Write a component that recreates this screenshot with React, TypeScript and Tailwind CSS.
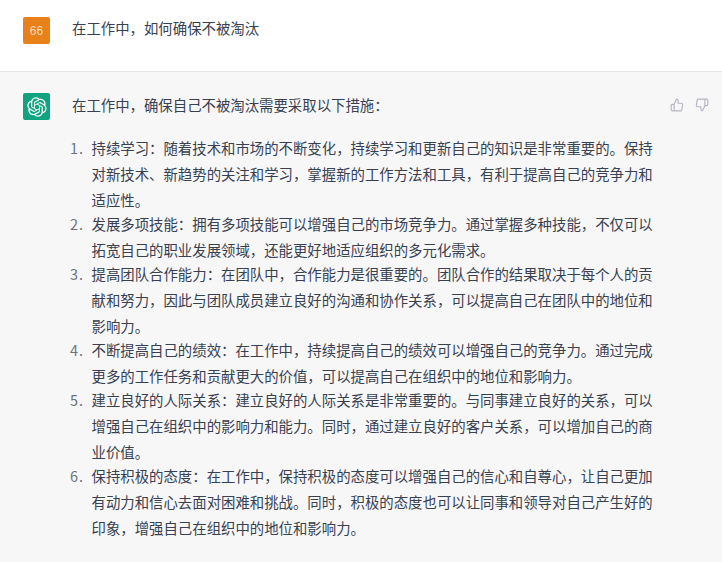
const items = [
  "持续学习：随着技术和市场的不断变化，持续学习和更新自己的知识是非常重要的。保持对新技术、新趋势的关注和学习，掌握新的工作方法和工具，有利于提高自己的竞争力和适应性。",
  "发展多项技能：拥有多项技能可以增强自己的市场竞争力。通过掌握多种技能，不仅可以拓宽自己的职业发展领域，还能更好地适应组织的多元化需求。",
  "提高团队合作能力：在团队中，合作能力是很重要的。团队合作的结果取决于每个人的贡献和努力，因此与团队成员建立良好的沟通和协作关系，可以提高自己在团队中的地位和影响力。",
  "不断提高自己的绩效：在工作中，持续提高自己的绩效可以增强自己的竞争力。通过完成更多的工作任务和贡献更大的价值，可以提高自己在组织中的地位和影响力。",
  "建立良好的人际关系：建立良好的人际关系是非常重要的。与同事建立良好的关系，可以增强自己在组织中的影响力和能力。同时，通过建立良好的客户关系，可以增加自己的商业价值。",
  "保持积极的态度：在工作中，保持积极的态度可以增强自己的信心和自尊心，让自己更加有动力和信心去面对困难和挑战。同时，积极的态度也可以让同事和领导对自己产生好的印象，增强自己在组织中的地位和影响力。",
];

const openAiLogo =
  "M37.5324 16.8707C37.9808 15.5241 38.1363 14.0974 37.9886 12.6859C37.8409 11.2744 37.3934 9.91076 36.676 8.68622C35.6126 6.83404 33.9882 5.3676 32.0373 4.4985C30.0864 3.62941 27.9098 3.40259 25.8215 3.85078C24.8796 2.7893 23.7219 1.94125 22.4257 1.36341C21.1295 0.785575 19.7249 0.491269 18.3058 0.500197C16.1708 0.495044 14.0893 1.16803 12.3614 2.42214C10.6335 3.67624 9.34853 5.44666 8.6917 7.47815C7.30085 7.76286 5.98686 8.3414 4.8377 9.17505C3.68854 10.0087 2.73073 11.0782 2.02839 12.312C0.956464 14.1591 0.498905 16.2988 0.721698 18.4228C0.944492 20.5467 1.83612 22.5449 3.268 24.1293C2.81966 25.4759 2.66413 26.9026 2.81182 28.3141C2.95951 29.7256 3.40701 31.0892 4.12437 32.3138C5.18791 34.1659 6.8123 35.6322 8.76321 36.5013C10.7141 37.3704 12.8907 37.5973 14.9789 37.1492C15.9208 38.2107 17.0786 39.0587 18.3747 39.6366C19.6709 40.2144 21.0755 40.5087 22.4946 40.4998C24.6307 40.5054 26.7133 39.8321 28.4418 38.5772C30.1704 37.3223 31.4556 35.5506 32.1119 33.5179C33.5027 33.2332 34.8167 32.6547 35.9659 31.821C37.115 30.9874 38.0728 29.9178 38.7752 28.684C39.8458 26.8371 40.3023 24.6979 40.0789 22.5748C39.8556 20.4517 38.9639 18.4544 37.5324 16.8707ZM22.4978 37.8849C20.7443 37.8874 19.0459 37.2733 17.6994 36.1501C17.7601 36.117 17.8666 36.0586 17.936 36.0161L25.9004 31.4156C26.1003 31.3019 26.2663 31.137 26.3813 30.9378C26.4964 30.7386 26.5563 30.5124 26.5549 30.2825V19.0542L29.9213 20.998C29.9389 21.0068 29.9541 21.0198 29.9656 21.0359C29.977 21.052 29.9842 21.0707 29.9867 21.0902V30.3889C29.9842 32.375 29.1946 34.2791 27.7909 35.6841C26.3872 37.0892 24.4838 37.8806 22.4978 37.8849ZM6.39227 31.0064C5.51397 29.4888 5.19742 27.7107 5.49804 25.9832C5.55718 26.0187 5.66048 26.0818 5.73461 26.1244L13.699 30.7248C13.8975 30.8408 14.1233 30.902 14.3532 30.902C14.583 30.902 14.8088 30.8408 15.0073 30.7248L24.731 25.1103V28.9979C24.7321 29.0177 24.7283 29.0376 24.7199 29.0556C24.7115 29.0736 24.6988 29.0893 24.6829 29.1012L16.6317 33.7497C14.9096 34.7416 12.8643 35.0097 10.9447 34.4954C9.02506 33.9811 7.38785 32.7263 6.39227 31.0064ZM4.29707 13.6194C5.17156 12.0998 6.55279 10.9364 8.19885 10.3327C8.19885 10.4013 8.19491 10.5228 8.19491 10.6071V19.808C8.19351 20.0378 8.25334 20.2638 8.36823 20.4629C8.48312 20.6619 8.64893 20.8267 8.84863 20.9404L18.5723 26.5542L15.206 28.4979C15.1894 28.5089 15.1703 28.5155 15.1505 28.5173C15.1307 28.5191 15.1107 28.516 15.0924 28.5082L7.04046 23.8557C5.32135 22.8601 4.06716 21.2235 3.55289 19.3046C3.03862 17.3858 3.30624 15.3413 4.29707 13.6194ZM31.955 20.0556L22.2312 14.4411L25.5976 12.4981C25.6142 12.4872 25.6333 12.4805 25.6531 12.4787C25.6729 12.4769 25.6928 12.4801 25.7111 12.4879L33.7631 17.1364C34.9967 17.849 36.0017 18.8982 36.6606 20.1613C37.3194 21.4244 37.6047 22.849 37.4832 24.2684C37.3617 25.6878 36.8382 27.0432 35.9743 28.1759C35.1103 29.3086 33.9415 30.1717 32.6047 30.6641C32.6047 30.5947 32.6047 30.4733 32.6047 30.3889V21.188C32.6066 20.9586 32.5474 20.7328 32.4332 20.5338C32.319 20.3348 32.154 20.1698 31.955 20.0556ZM35.3055 15.0128C35.2464 14.9765 35.1431 14.9142 35.069 14.8717L27.1045 10.2712C26.906 10.1554 26.6803 10.0943 26.4504 10.0943C26.2206 10.0943 25.9948 10.1554 25.7963 10.2712L16.0726 15.8858V11.9982C16.0715 11.9783 16.0753 11.9585 16.0837 11.9405C16.0921 11.9225 16.1048 11.9068 16.1207 11.8949L24.1719 7.25025C25.4053 6.53903 26.8158 6.19376 28.2383 6.25482C29.6608 6.31589 31.0364 6.78077 32.2044 7.59508C33.3723 8.40939 34.2842 9.53945 34.8334 10.8531C35.3826 12.1667 35.5464 13.6095 35.3055 15.0128ZM14.2424 21.9419L10.8752 19.9981C10.8576 19.9893 10.8423 19.9763 10.8309 19.9602C10.8195 19.9441 10.8122 19.9254 10.8098 19.9058V10.6071C10.8107 9.18295 11.2173 7.78848 11.9819 6.58696C12.7466 5.38544 13.8377 4.42659 15.1275 3.82264C16.4173 3.21869 17.8524 2.99464 19.2649 3.1767C20.6775 3.35876 22.0089 3.93941 23.1034 4.85067C23.0427 4.88379 22.937 4.94215 22.8668 4.98473L14.9024 9.58517C14.7025 9.69878 14.5366 9.86356 14.4215 10.0626C14.3065 10.2616 14.2466 10.4877 14.2479 10.7175L14.2424 21.9419ZM16.071 17.9991L20.4018 15.4978L24.7325 17.9975V22.9985L20.4018 25.4983L16.071 22.9985V17.9991Z";

export default function App() {
  return (
    <div lang="zh-CN" className="h-[562px] w-[722px] overflow-hidden bg-white text-[14.4px] leading-[26px] text-[#374151] [font-family:'Noto_Sans_CJK_SC',sans-serif]">
      <div className="flex h-[72px] gap-[22px] border-b border-[#e5e5e5] pl-[23px] pt-[17px]">
        <div className="flex h-[27px] w-[27px] items-center justify-center rounded-[2px] bg-[#e8811a] text-[12px] leading-none text-[#fbd9b0] [font-family:'Liberation_Sans',sans-serif]">66</div>
        <p className="-mt-[2px]">在工作中，如何确保不被淘汰</p>
      </div>
      <div className="flex h-[490px] bg-[#f7f7f8] pl-[23px] pt-[21px]">
        <div className="flex h-[27px] w-[27px] shrink-0 items-center justify-center rounded-[2px] bg-[#10a37f]">
          <svg width="20" height="20" viewBox="0 0 41 41" fill="white">
            <path d={openAiLogo} />
          </svg>
        </div>
        <div className="ml-[22px] w-[582px] shrink-0">
          <p className="-mt-[1px]">在工作中，确保自己不被淘汰需要采取以下措施：</p>
          <ol className="mt-[17px] flex flex-col">
            {items.map((item, i) => (
              <li key={item} className="-mb-[2px] flex">
                <span className="w-[19.5px] shrink-0 -ml-[2px] mr-[2px] text-right pr-[9px] tracking-[1px] text-[#6b7280]">{i + 1}.</span>
                <span>{item}</span>
              </li>
            ))}
          </ol>
        </div>
        <div className="ml-[16px] flex gap-[11px] pt-[5px] text-[#b5b5c5]">
          <svg width="14" height="14" viewBox="0 0 24 24" fill="none" stroke="currentColor" strokeWidth="2" strokeLinecap="round" strokeLinejoin="round">
            <path d="M14 9V5a3 3 0 0 0-3-3l-4 9v11h11.280a2 2 0 0 0 2-1.700l1.380-9a2 2 0 0 0-2-2.300zM7 22H4a2 2 0 0 1-2-2v-7a2 2 0 0 1 2-2h3" />
          </svg>
          <svg width="14" height="14" viewBox="0 0 24 24" fill="none" stroke="currentColor" strokeWidth="2" strokeLinecap="round" strokeLinejoin="round">
            <path d="M10 15v4a3 3 0 0 0 3 3l4-9V2H5.720a2 2 0 0 0-2 1.700l-1.380 9a2 2 0 0 0 2 2.300zm7-13h2.670A2.310 2.310 0 0 1 22 4v7a2.310 2.310 0 0 1-2.330 2H17" />
          </svg>
        </div>
      </div>
    </div>
  );
}
